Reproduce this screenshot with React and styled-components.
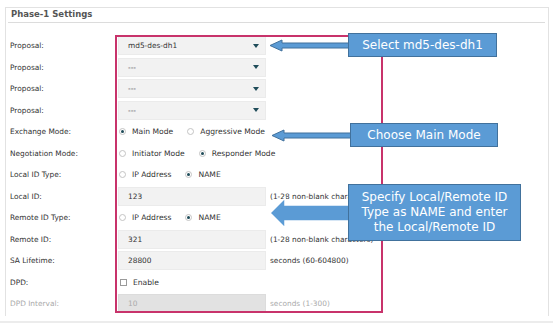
import React from "react";
import styled, { createGlobalStyle } from "styled-components";

const Global = createGlobalStyle`
  html, body { margin: 0; padding: 0; background: #fff; }
  body { font-family: "DejaVu Sans", Verdana, sans-serif; width: 553px; height: 324px; overflow: hidden; }
`;

const Page = styled.div`
  position: relative;
  width: 553px;
  height: 324px;
  padding: 7px 0 0 5px;
  box-sizing: border-box;
`;

const Panel = styled.div`
  width: 544px;
  height: 309px;
  box-sizing: border-box;
  border: 1px solid #e2e2e2;
  border-bottom: none;
  padding: 0 3px 0 1px;
`;

const Footer = styled.div`
  margin: 5px 0 0 -5px;
  border-top: 2px solid #ececec;
`;

const Header = styled.div`
  height: 14px;
  border-bottom: 1px solid #dcdcdc;
  margin-left: 1px;
  padding-left: 3px;
  font-size: 8.5px;
  font-weight: bold;
  color: #555;
  line-height: 12px;
`;

const Form = styled.div`
  padding-top: 12px;
  display: flex;
  flex-direction: column;
`;

const Row = styled.div`
  display: grid;
  grid-template-columns: 104px 148px auto;
  column-gap: 4px;
  align-items: center;
  height: 21.5px;
  padding-left: 3px;
`;

const Label = styled.div`
  font-size: 7.4px;
  color: ${(p) => (p.$disabled ? "#aaa" : "#333")};
`;

const Field = styled.div`
  height: 19px;
  box-sizing: border-box;
  background: ${(p) => (p.$disabled ? "#e2e2e2" : "#f2f2f2")};
  border: 1px solid ${(p) => (p.$disabled ? "#dcdcdc" : "#ebebeb")};
  display: flex;
  align-items: center;
  justify-content: space-between;
  padding: 0 6px 0 9px;
  font-size: 7.4px;
  color: ${(p) => (p.$disabled ? "#aaa" : p.$muted ? "#444" : "#333")};
`;

const Caret = styled.span`
  width: 0;
  height: 0;
  border-left: 3px solid transparent;
  border-right: 3px solid transparent;
  border-top: 4px solid #1f4c59;
`;

const Hint = styled.div`
  font-size: 7.4px;
  color: ${(p) => (p.$disabled ? "#aaa" : "#333")};
  white-space: nowrap;
`;

const Options = styled.div`
  grid-column: 2 / span 2;
  display: flex;
  align-items: center;
  padding-left: 1px;
  white-space: nowrap;
`;

const Radio = styled.span`
  width: 7px;
  height: 7px;
  flex: none;
  box-sizing: border-box;
  border-radius: 50%;
  border: 1px solid #c4c4c4;
  background: #fff;
  display: inline-flex;
  align-items: center;
  justify-content: center;
  &::after {
    content: "";
    width: 3px;
    height: 3px;
    border-radius: 50%;
    background: ${(p) => (p.$on ? "#1f4c59" : "transparent")};
  }
`;

const Check = styled.span`
  width: 7px;
  height: 7px;
  flex: none;
  box-sizing: border-box;
  border: 1px solid #9a9a9a;
  background: #fff;
  margin-left: 1px;
`;

const OptText = styled.span`
  font-size: 7.6px;
  color: #333;
  margin-left: 6px;
  margin-right: 14px;
`;

const Highlight = styled.div`
  position: absolute;
  left: 115px;
  top: 35px;
  width: 268px;
  height: 278px;
  box-sizing: border-box;
  border: 2px solid #c8336b;
  pointer-events: none;
`;

const Callout = styled.div`
  position: absolute;
  left: ${(p) => p.$x}px;
  top: ${(p) => p.$y}px;
  width: ${(p) => p.$w}px;
  height: ${(p) => p.$h}px;
  box-sizing: border-box;
  background: #5b9bd5;
  border: 1px solid #41719c;
  color: #fff;
  font-size: 12px;
  line-height: 15px;
  text-align: center;
  display: flex;
  align-items: center;
  justify-content: center;
`;

const Overlay = styled.svg`
  position: absolute;
  left: 0;
  top: 0;
  pointer-events: none;
`;

function Select({ value, muted }) {
  return (
    <Field $muted={muted}>
      <span>{value}</span>
      <Caret />
    </Field>
  );
}

function RadioGroup({ options, selected }) {
  return (
    <Options>
      {options.map((o, i) => (
        <React.Fragment key={o}>
          <Radio $on={i === selected} />
          <OptText>{o}</OptText>
        </React.Fragment>
      ))}
    </Options>
  );
}

export default function App() {
  return (
    <Page>
      <Global />
      <Panel>
        <Header>Phase-1 Settings</Header>
        <Form>
          <Row>
            <Label>Proposal:</Label>
            <Select value="md5-des-dh1" />
          </Row>
          <Row>
            <Label>Proposal:</Label>
            <Select value="---" muted />
          </Row>
          <Row>
            <Label>Proposal:</Label>
            <Select value="---" muted />
          </Row>
          <Row>
            <Label>Proposal:</Label>
            <Select value="---" muted />
          </Row>
          <Row>
            <Label>Exchange Mode:</Label>
            <RadioGroup options={["Main Mode", "Aggressive Mode"]} selected={0} />
          </Row>
          <Row>
            <Label>Negotiation Mode:</Label>
            <RadioGroup options={["Initiator Mode", "Responder Mode"]} selected={1} />
          </Row>
          <Row>
            <Label>Local ID Type:</Label>
            <RadioGroup options={["IP Address", "NAME"]} selected={1} />
          </Row>
          <Row>
            <Label>Local ID:</Label>
            <Field>123</Field>
            <Hint>(1-28 non-blank characters)</Hint>
          </Row>
          <Row>
            <Label>Remote ID Type:</Label>
            <RadioGroup options={["IP Address", "NAME"]} selected={1} />
          </Row>
          <Row>
            <Label>Remote ID:</Label>
            <Field>321</Field>
            <Hint>(1-28 non-blank characters)</Hint>
          </Row>
          <Row>
            <Label>SA Lifetime:</Label>
            <Field>28800</Field>
            <Hint>seconds (60-604800)</Hint>
          </Row>
          <Row>
            <Label>DPD:</Label>
            <Options>
              <Check />
              <OptText>Enable</OptText>
            </Options>
          </Row>
          <Row>
            <Label $disabled>DPD Interval:</Label>
            <Field $disabled>10</Field>
            <Hint $disabled>seconds (1-300)</Hint>
          </Row>
        </Form>
      </Panel>
      <Footer />

      <Highlight />

      <Overlay width="553" height="324" viewBox="0 0 553 324">
        <path
          d="M270 45.5 L282 40 L282 43 L350 43 L350 48 L282 48 L282 51 Z"
          fill="#5b9bd5"
          stroke="#41719c"
          strokeWidth="1"
        />
        <path
          d="M272 135.5 L284 130 L284 133 L352 133 L352 138 L284 138 L284 141 Z"
          fill="#5b9bd5"
          stroke="#41719c"
          strokeWidth="1"
        />
        <path
          d="M270 213 L285 198 L285 205 L350 205 L350 221 L285 221 L285 228 Z"
          fill="#5b9bd5"
          stroke="#ffffff"
          strokeWidth="1.5"
        />
      </Overlay>

      <Callout $x={348} $y={33} $w={149} $h={24}>Select md5-des-dh1</Callout>
      <Callout $x={350} $y={123} $w={148} $h={24}>Choose Main Mode</Callout>
      <Callout $x={348} $y={184} $w={173} $h={57}>
        Specify Local/Remote ID
        <br />
        Type as NAME and enter
        <br />
        the Local/Remote ID
      </Callout>
    </Page>
  );
}
